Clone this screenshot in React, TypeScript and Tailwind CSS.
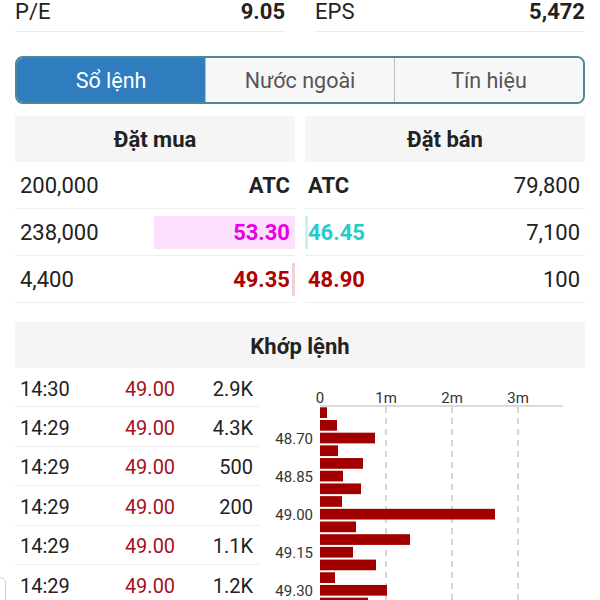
import React from 'react';

type BookRow = {
  left: string;
  leftPrice: string;
  leftColor: string;
  leftBar: number;
  leftBarColor: string;
  rightPrice: string;
  rightColor: string;
  right: string;
  rightBar: number;
  rightBarColor: string;
};

const bookRows: BookRow[] = [
  { left: '200,000', leftPrice: 'ATC', leftColor: 'text-[#222]', leftBar: 0, leftBarColor: '', rightPrice: 'ATC', rightColor: 'text-[#222]', right: '79,800', rightBar: 0, rightBarColor: '' },
  { left: '238,000', leftPrice: '53.30', leftColor: 'text-[#e600e6]', leftBar: 141, leftBarColor: 'bg-[#fde0fb]', rightPrice: '46.45', rightColor: 'text-[#26cccc]', right: '7,100', rightBar: 3, rightBarColor: 'bg-[#c9f1f1]' },
  { left: '4,400', leftPrice: '49.35', leftColor: 'text-[#b00000]', leftBar: 3, leftBarColor: 'bg-[#f3d2d4]', rightPrice: '48.90', rightColor: 'text-[#b00000]', right: '100', rightBar: 0, rightBarColor: '' },
];

const trades = [
  { time: '14:30', price: '49.00', vol: '2.9K' },
  { time: '14:29', price: '49.00', vol: '4.3K' },
  { time: '14:29', price: '49.00', vol: '500' },
  { time: '14:29', price: '49.00', vol: '200' },
  { time: '14:29', price: '49.00', vol: '1.1K' },
  { time: '14:29', price: '49.00', vol: '1.2K' },
];

// bar widths in px (1m = 66px)
const bars = [7, 17, 55, 18, 43, 23, 41, 22, 175, 36, 90, 33, 56, 15, 67, 48];
const priceLabels: Record<number, string> = { 2: '48.70', 5: '48.85', 8: '49.00', 11: '49.15', 14: '49.30' };

function VolumeChart() {
  const x0 = 60;
  const top = 39.3;
  const step = 12.69;
  return (
    <svg width="340" height="232" className="shrink-0">
      {['0', '1m', '2m', '3m'].map((t, i) => (
        <text key={t} x={x0 + i * 66} y={34.5} textAnchor="middle" fontSize="15" fill="#333" fontFamily="Roboto, sans-serif">
          {t}
        </text>
      ))}
      <line x1={x0} y1={38} x2={303} y2={38} stroke="#cfcfcf" strokeWidth="1.5" />
      {[1, 2, 3].map((i) => (
        <line key={i} x1={x0 + i * 66} y1={39} x2={x0 + i * 66} y2={232} stroke="#aaa" strokeWidth="1" strokeDasharray="6 5" />
      ))}
      {bars.map((w, i) => (
        <rect key={i} x={x0} y={top + i * step} width={w} height={10.7} fill="#a10000" />
      ))}
      {Object.entries(priceLabels).map(([i, label]) => (
        <text key={i} x={53} y={top + Number(i) * step + 11} textAnchor="end" fontSize="15" fill="#333" fontFamily="Roboto, sans-serif">
          {label}
        </text>
      ))}
    </svg>
  );
}

export default function App() {
  const tabs = ['Sổ lệnh', 'Nước ngoài', 'Tín hiệu'];

  return (
    <div className="relative w-[600px] h-[600px] overflow-hidden bg-white text-[#222] font-['Roboto',sans-serif]">
      {/* stats */}
      <div className="flex gap-[30px] px-[15px]">
        <div className="flex-1 flex justify-between h-[32px] border-b border-[#ececec] text-[22px] leading-[24px]">
          <span>P/E</span>
          <span className="font-bold">9.05</span>
        </div>
        <div className="flex-1 flex justify-between h-[32px] border-b border-[#ececec] text-[22px] leading-[24px]">
          <span>EPS</span>
          <span className="font-bold">5,472</span>
        </div>
      </div>

      {/* tabs */}
      <div className="mx-[15px] mt-[24px] h-[48px] flex border-2 border-[#4d8796] rounded-[8px] overflow-hidden">
        {tabs.map((t, i) => (
          <div
            key={t}
            className={
              i === 0
                ? 'flex-1 flex items-center justify-center pt-[2px] bg-[#2f7cbf] text-white text-[21.5px]'
                : 'flex-1 flex items-center justify-center pt-[2px] bg-[#f7f7f7] text-[#555] text-[21.5px] border-l border-[#bdbdbd]'
            }
          >
            {t}
          </div>
        ))}
      </div>

      {/* order book */}
      <div className="flex gap-[10px] px-[15px] mt-[12px]">
        <div className="flex-1">
          <div className="h-[46px] bg-[#f5f5f5] flex items-center justify-center font-bold text-[22px]">Đặt mua</div>
          {bookRows.map((r, i) => (
            <div key={i} className="relative h-[47px] border-b border-[#eeeeee] flex items-center justify-between pl-[5px] pr-[5px] text-[22px]">
              {r.leftBar > 0 && (
                <div className={`absolute right-0 top-[7px] h-[33px] ${r.leftBarColor}`} style={{ width: r.leftBar }} />
              )}
              <span className="relative">{r.left}</span>
              <span className={`relative font-bold ${r.leftColor}`}>{r.leftPrice}</span>
            </div>
          ))}
        </div>
        <div className="flex-1">
          <div className="h-[46px] bg-[#f5f5f5] flex items-center justify-center font-bold text-[22px]">Đặt bán</div>
          {bookRows.map((r, i) => (
            <div key={i} className="relative h-[47px] border-b border-[#eeeeee] flex items-center justify-between pl-[3px] pr-[5px] text-[22px]">
              {r.rightBar > 0 && (
                <div className={`absolute left-0 top-[7px] h-[33px] ${r.rightBarColor}`} style={{ width: r.rightBar }} />
              )}
              <span className={`relative font-bold ${r.rightColor}`}>{r.rightPrice}</span>
              <span className="relative">{r.right}</span>
            </div>
          ))}
        </div>
      </div>

      {/* matched orders */}
      <div className="mx-[15px] mt-[19px] h-[46px] pt-[2px] bg-[#f5f5f5] flex items-center justify-center font-bold text-[22px]">
        Khớp lệnh
      </div>
      <div className="flex pl-[15px]">
        <div className="w-[245px] shrink-0">
          {trades.map((t, i) => (
            <div key={i} className="h-[39.4px] pt-[3px] border-b border-[#eeeeee] flex items-center text-[20px]">
              <span className="w-[95px] pl-[5px]">{t.time}</span>
              <span className="w-[80px] text-center text-[#a5101c]">{t.price}</span>
              <span className="flex-1 text-right pr-[7px]">{t.vol}</span>
            </div>
          ))}
        </div>
        <VolumeChart />
      </div>

      {/* floating edge element */}
      <div className="absolute left-[-20px] top-[577px] w-[26px] h-[40px] border border-[#cfcfcf] rounded-[6px] bg-white" />
    </div>
  );
}
